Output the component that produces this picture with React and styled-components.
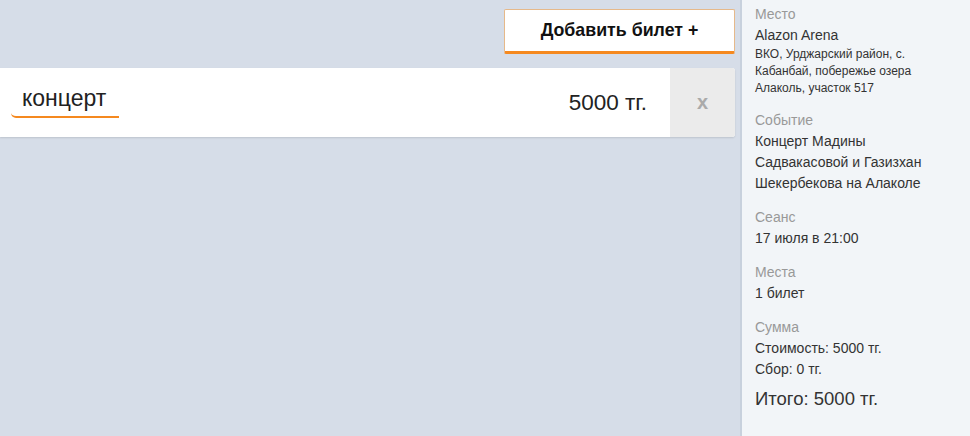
import React from "react";
import styled, { createGlobalStyle } from "styled-components";

const Global = createGlobalStyle`
  html, body { margin: 0; padding: 0; }
  body { font-family: "Liberation Sans", Arial, sans-serif; background: #d6dde8; }
  #root { height: 436px; }
`;

const Page = styled.div`
  display: flex;
  width: 970px;
  height: 436px;
  overflow: hidden;
`;

const Main = styled.div`
  width: 740px;
  padding: 9px 5px 0 0;
  box-sizing: border-box;
  display: flex;
  flex-direction: column;
  align-items: flex-end;
  gap: 14px;
  background: #d6dde8;
`;

const AddButton = styled.button`
  width: 231px;
  height: 45px;
  box-sizing: border-box;
  background: #fff;
  border: 1px solid #e6b98a;
  border-bottom: 3px solid #f5891f;
  border-radius: 2px;
  font-family: "Liberation Sans", Arial, sans-serif;
  font-weight: bold;
  font-size: 17.8px;
  color: #111;
  padding: 0;
  cursor: pointer;
`;

const TicketRow = styled.div`
  width: 100%;
  height: 69px;
  display: flex;
  align-items: stretch;
  background: #fff;
  border-radius: 0 3px 3px 0;
  box-shadow: 0 1px 2px rgba(0, 0, 0, 0.12);
  overflow: hidden;
`;

const NameField = styled.div`
  margin: 14px 0 0 11px;
  width: 108px;
  height: 36px;
  box-sizing: border-box;
  padding-left: 11px;
  border-bottom: 2px solid #f5891f;
  border-radius: 0 0 0 5px;
  font-size: 23px;
  line-height: 33px;
  color: #222;
`;

const Price = styled.div`
  flex: 1;
  display: flex;
  align-items: center;
  justify-content: flex-end;
  padding-right: 23px;
  font-size: 22.5px;
  color: #222;
`;

const RemoveButton = styled.div`
  width: 65px;
  background: #ebebeb;
  display: flex;
  align-items: center;
  justify-content: center;
  color: #aaa;
  font-weight: bold;
  font-size: 20px;
`;

const Sidebar = styled.aside`
  flex: 1;
  background: #f2f5f8;
  border-left: 2px solid #c8d1dd;
  padding: 4px 0 0 13px;
  box-sizing: border-box;
`;

const Section = styled.div`
  margin-bottom: 13px;
`;

const Label = styled.div`
  font-size: 14px;
  line-height: 21px;
  color: #999;
`;

const Value = styled.div`
  font-size: ${(p) => (p.$size ? p.$size : 14)}px;
  line-height: ${(p) => (p.$lh ? p.$lh : 21)}px;
  color: #333;
  margin-top: ${(p) => (p.$mt ? p.$mt : 0)}px;
  width: ${(p) => (p.$w ? p.$w + "px" : "auto")};
`;

export default function App() {
  return (
    <>
      <Global />
      <Page>
        <Main>
          <AddButton>Добавить билет +</AddButton>
          <TicketRow>
            <NameField>концерт</NameField>
            <Price>5000 тг.</Price>
            <RemoveButton>x</RemoveButton>
          </TicketRow>
        </Main>
        <Sidebar>
          <Section>
            <Label>Место</Label>
            <Value>Alazon Arena</Value>
            <Value $size={12} $lh={17} $w={180}>
              ВКО, Урджарский район, с. Кабанбай, побережье озера Алаколь, участок 517
            </Value>
          </Section>
          <Section>
            <Label>Событие</Label>
            <Value $w={185}>Концерт Мадины Садвакасовой и Газизхан Шекербекова на Алаколе</Value>
          </Section>
          <Section>
            <Label>Сеанс</Label>
            <Value>17 июля в 21:00</Value>
          </Section>
          <Section>
            <Label>Места</Label>
            <Value>1 билет</Value>
          </Section>
          <Section>
            <Label>Сумма</Label>
            <Value>Стоимость: 5000 тг.</Value>
            <Value>Сбор: 0 тг.</Value>
            <Value $size={18.5} $lh={24} $mt={7}>Итого: 5000 тг.</Value>
          </Section>
        </Sidebar>
      </Page>
    </>
  );
}
